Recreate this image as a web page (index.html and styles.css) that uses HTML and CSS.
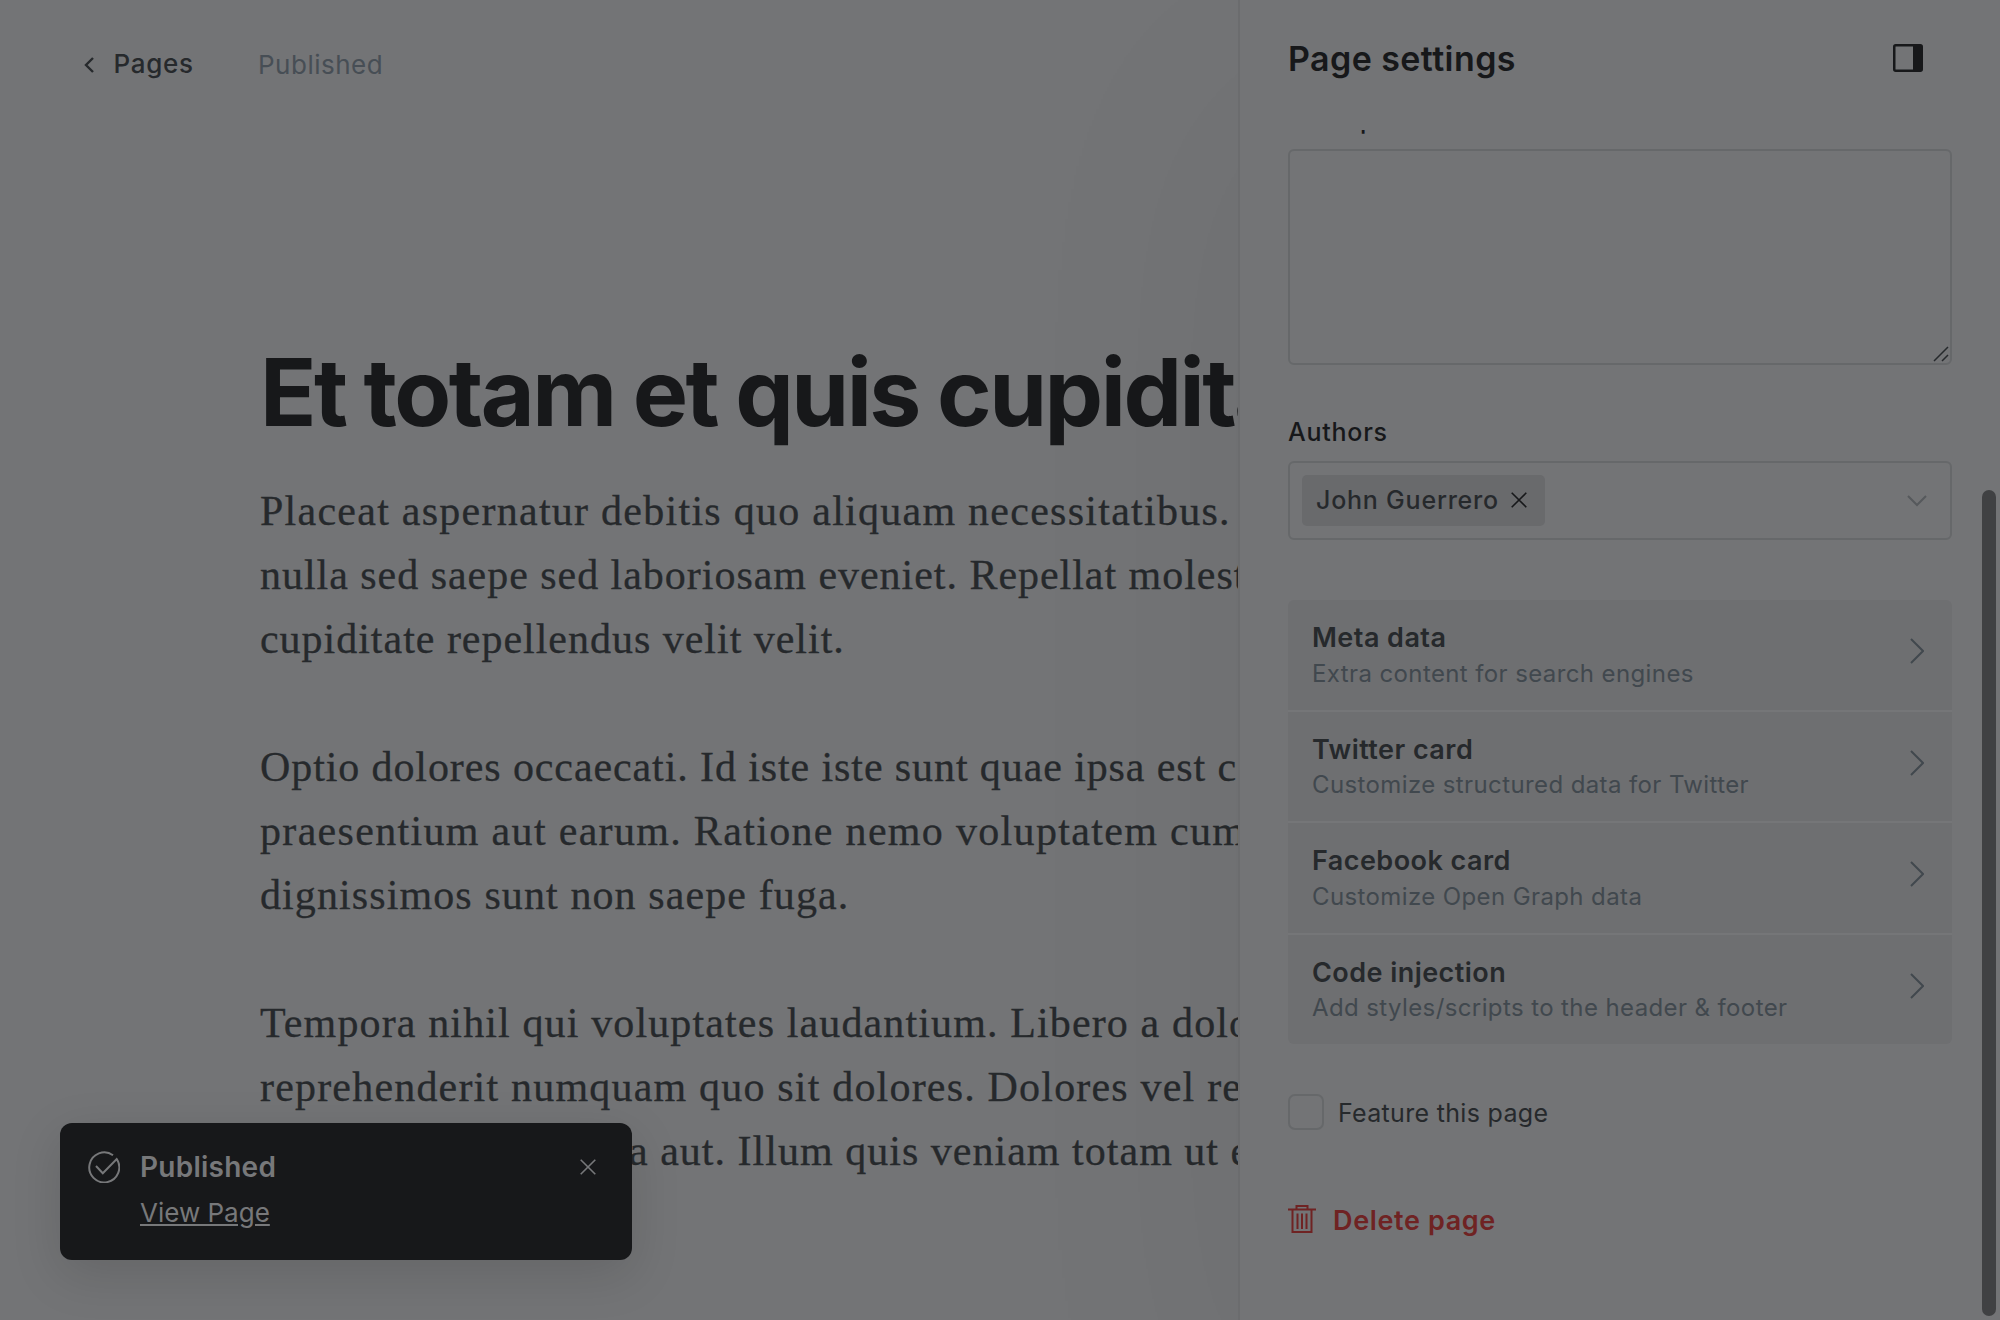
FILE: index.html
```html
<!DOCTYPE html>
<html lang="en">
<head>
<meta charset="utf-8">
<title>Page settings</title>
<link rel="stylesheet" href="styles.css">
</head>
<body>
<div class="app">
  <main class="editor">
    <header class="topbar">
      <a class="back"><svg class="back-icon" viewBox="0 0 10 16"><path d="M9 1 2 8l7 7"/></svg><span>Pages</span></a>
      <span class="status">Published</span>
    </header>
    <article class="post">
      <h1 class="post-title">Et totam et quis cupidita</h1>
      <div class="post-body">
        <p><span class="line l1">Placeat aspernatur debitis quo aliquam necessitatibus.</span><span class="line l2">nulla sed saepe sed laboriosam eveniet. Repellat molest</span><span class="line l3">cupiditate repellendus velit velit.</span></p>
        <p><span class="line l4">Optio dolores occaecati. Id iste iste sunt quae ipsa est c</span><span class="line l5">praesentium aut earum. Ratione nemo voluptatem cum</span><span class="line l6">dignissimos sunt non saepe fuga.</span></p>
        <p><span class="line l7">Tempora nihil qui voluptates laudantium. Libero a dolo</span><span class="line l8">reprehenderit numquam quo sit dolores. Dolores vel re</span><span class="line l9">a aut. Illum quis veniam totam ut e</span></p>
      </div>
    </article>
  </main>
  <aside class="panel">
    <header class="panel-head">
      <h2 class="panel-title">Page settings</h2>
      <svg class="layout-icon" viewBox="0 0 30 28"><rect x="1.25" y="1.25" width="27.5" height="25.5" rx="1.5"/><path d="M20 1h9v26h-9z"/></svg>
    </header>
    <div class="panel-body">
      <span class="label label-excerpt">Excerpt</span>
      <div class="textarea"><svg class="grip" viewBox="0 0 16 16"><path d="M1 15 15 1M9 15l6-6"/></svg></div>
      <span class="label label-authors">Authors</span>
      <div class="select">
        <span class="token"><span>John Guerrero</span><svg class="token-x" viewBox="0 0 16 16"><path d="m.7.7 14.600 14.600M15.300.7.7 15.300"/></svg></span>
        <svg class="caret" viewBox="0 0 20 12"><path d="m1 1 9 9 9-9"/></svg>
      </div>
      <ul class="menu">
        <li><div><b>Meta data</b><small>Extra content for search engines</small></div><svg class="chev" viewBox="0 0 14 26"><path d="m1 1 12 12L1 25"/></svg></li>
        <li><div><b>Twitter card</b><small>Customize structured data for Twitter</small></div><svg class="chev" viewBox="0 0 14 26"><path d="m1 1 12 12L1 25"/></svg></li>
        <li><div><b>Facebook card</b><small>Customize Open Graph data</small></div><svg class="chev" viewBox="0 0 14 26"><path d="m1 1 12 12L1 25"/></svg></li>
        <li><div><b>Code injection</b><small>Add styles/scripts to the header &amp; footer</small></div><svg class="chev" viewBox="0 0 14 26"><path d="m1 1 12 12L1 25"/></svg></li>
      </ul>
      <div class="feature"><span class="checkbox"></span><span class="feature-label">Feature this page</span></div>
      <div class="delete"><svg class="trash" viewBox="0 0 28 29"><path d="M0 4.500h28M8.500 4V1h11v3M4.500 4.500v22.500h19V4.500M9.500 8.500v15.500M14 8.500v15.500M18.500 8.500v15.500"/></svg><span class="delete-label">Delete page</span></div>
    </div>
    <div class="scrollbar"></div>
  </aside>
</div>
<div class="toast">
  <svg class="toast-check" viewBox="0 0 32 32"><path d="M25 4.200A15 15 0 1 0 28.700 8L14.800 22.300 8 15"/></svg>
  <div class="toast-text"><strong>Published</strong><a>View Page</a></div>
  <svg class="toast-x" viewBox="0 0 16 16"><path d="m.7.7 14.600 14.600M15.300.7.7 15.300"/></svg>
</div>
</body>
</html>
```
FILE: styles.css
```css
* { box-sizing: border-box; }
body { margin: 0; background: #737476; color: #26292c; font-family: Inter, "Liberation Sans", sans-serif; overflow: hidden; }
svg { fill: none; stroke: currentColor; stroke-width: 2; flex: none; display: block; }
h1, h2, p, ul { margin: 0; padding: 0; }
.app { display: flex; width: 2000px; height: 1320px; overflow: hidden; }

/* Editor */
.editor { width: 1238px; flex: none; overflow: hidden; }
.topbar { display: flex; align-items: center; height: 128px; padding-left: 84px; font-size: 26px; line-height: 32px; }
.back { display: flex; align-items: center; gap: 19.500px; font-weight: 500; width: 174px; letter-spacing: .7px; }
.back-icon { width: 10px; height: 16px; stroke-width: 2.400; margin-top: 1px; }
.status { color: #474e55; letter-spacing: .5px; padding-top: 2px; }
.post { padding: 211px 0 0 260px; white-space: nowrap; }
.post-title { color: #17181a; font-size: 93px; line-height: 106px; font-weight: 700; letter-spacing: -2.500px; word-spacing: -1.500px; }
.post-body { font-family: "Liberation Serif", serif; font-size: 42px; line-height: 64px; padding-top: 34px; -webkit-text-stroke: .3px currentColor; }
.post-body p { margin-bottom: 64px; }
.line { display: block; }
.l1 { letter-spacing: 1.260px; }
.l2 { letter-spacing: .97px; }
.l3 { letter-spacing: .98px; }
.l4 { letter-spacing: .9px; }
.l5 { letter-spacing: 1.320px; }
.l6 { letter-spacing: 1.100px; }
.l7 { letter-spacing: 1.130px; }
.l8 { letter-spacing: 1.190px; }
.l9 { letter-spacing: 1.020px; padding-left: 369px; }

/* Settings panel */
.panel { width: 762px; flex: none; position: relative; display: flex; flex-direction: column; padding: 0 48px; border-left: 2px solid #6b6c6e; background: #737476; box-shadow: 0 100px 240px rgba(0,0,0,.055); }
.panel-head { height: 130px; flex: none; display: flex; justify-content: space-between; padding: 38px 29px 0 0; color: #17181a; }
.panel-title { font-size: 34px; line-height: 42px; font-weight: 600; letter-spacing: .42px; }
.layout-icon { width: 30px; height: 28px; margin-top: 6px; stroke-width: 2.500; }
.layout-icon path { fill: currentColor; stroke: none; }
.panel-body { flex: 1; overflow: hidden; display: flex; flex-direction: column; font-size: 25px; line-height: 32px; }
.label { color: #17181a; font-weight: 500; letter-spacing: .75px; }
.label-excerpt { margin: -26px 0 13px; letter-spacing: .9px; }
.textarea { height: 216px; border: 2px solid #66686a; border-radius: 6px; display: flex; align-items: flex-end; justify-content: flex-end; padding: 1px; }
.grip { width: 16px; height: 16px; stroke-width: 1.500; }
.label-authors { margin: 51px 0 13px; }
.select { height: 79px; border: 2px solid #66686a; border-radius: 6px; display: flex; align-items: center; justify-content: space-between; padding: 0 23px 0 12px; }
.token { display: flex; align-items: center; height: 51px; background: #696a6c; border-radius: 5px; width: 243px; justify-content: space-between; padding: 0 18px 1px 14px; font-weight: 500; letter-spacing: .78px; }
.token-x { width: 16px; height: 16px; color: #17181a; stroke-width: 1.600; }
.caret { width: 20px; height: 12px; color: #56595c; }
.menu { list-style: none; margin-top: 60px; display: flex; flex-direction: column; gap: 2px; background: #757678; border-radius: 6px; overflow: hidden; flex: none; }
.menu li { height: 109.500px; background: #6e6f71; display: flex; justify-content: space-between; padding: 20px 28px 0 24px; }
.menu b { display: block; font-size: 27px; line-height: 35px; font-weight: 600; letter-spacing: .45px; }
.menu small { display: block; font-size: 24px; line-height: 35px; color: #41484e; letter-spacing: .39px; margin-top: .5px; }
.chev { width: 14px; height: 26px; margin-top: 18px; color: #41484e; }
.feature { display: flex; align-items: center; gap: 14px; margin-top: 50px; height: 36px; letter-spacing: .32px; }
.feature-label { padding-top: 2px; }
.checkbox { width: 36px; height: 36px; border: 2px solid #66686a; border-radius: 7px; }
.delete { display: flex; align-items: center; gap: 17px; margin-top: 71px; font-size: 27px; font-weight: 600; color: #6f2323; letter-spacing: .63px; }
.delete-label { padding-top: 4px; }
.trash { width: 28px; height: 29px; margin-top: 1px; }
.scrollbar { position: absolute; right: 4px; top: 490px; width: 14px; height: 826px; border-radius: 7px; background: #404143; }

/* Notification */
.toast { position: absolute; left: 60px; top: 1123px; width: 572px; height: 137px; border-radius: 12px; background: #17181a; color: #77787a; display: flex; padding: 28px 36px 0 28px; box-shadow: 0 14px 50px rgba(0,0,0,.13); }
.toast-check { width: 32px; height: 32px; }
.toast-text { flex: 1; padding-left: 20px; margin-top: -1px; display: flex; flex-direction: column; align-items: flex-start; }
.toast-text strong { font-size: 28px; line-height: 34px; font-weight: 600; letter-spacing: .25px; }
.toast-text a { font-size: 26px; line-height: 32px; margin-top: 13px; text-decoration: underline; }
.toast-x { width: 16px; height: 16px; margin-top: 8px; stroke-width: 1.600; }
```
